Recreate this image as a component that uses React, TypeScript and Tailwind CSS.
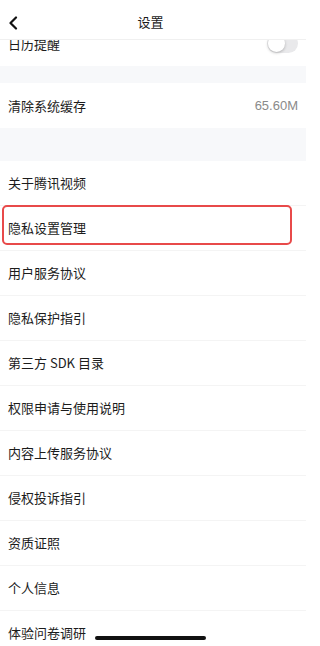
const items = [
  "关于腾讯视频",
  "隐私设置管理",
  "用户服务协议",
  "隐私保护指引",
  "第三方 SDK 目录",
  "权限申请与使用说明",
  "内容上传服务协议",
  "侵权投诉指引",
  "资质证照",
  "个人信息",
  "体验问卷调研",
];

const font = { fontFamily: '"Noto Sans CJK SC", "Liberation Sans", sans-serif' };

const Row = ({ label, highlight }: { label: string; highlight?: boolean }) => (
  <div className="relative flex h-[45px] shrink-0 items-center border-b border-[#f4f4f4] bg-white px-2 text-[13px] text-[#1c1c1c]">
    {label}
    {highlight && (
      <div className="pointer-events-none absolute left-[2px] right-[14px] top-[-1px] bottom-[5px] rounded-[5px] border-2 border-[#e84a4a]" />
    )}
  </div>
);

export default function App() {
  return (
    <div className="relative flex h-[646px] w-[306px] flex-col overflow-hidden bg-[#f7f8fa]" style={font}>
      <header className="relative flex h-[40px] shrink-0 items-center justify-center border-b border-[#f0f0f0] bg-white pt-[5px]">
        <svg className="absolute left-[8px] top-[16px]" width="10" height="14" viewBox="0 0 10 14" fill="none">
          <path d="M8 1.5L2.5 7L8 12.5" stroke="#111" strokeWidth="2.2" strokeLinecap="round" strokeLinejoin="round" />
        </svg>
        <span className="pr-[5px] text-[13px] text-[#1a1a1a]">设置</span>
      </header>

      <div className="flex h-[26px] shrink-0 items-end overflow-hidden bg-white">
        <div className="flex h-[45px] w-full shrink-0 items-center justify-between px-2 text-[13px] text-[#1c1c1c]">
          <span>日历提醒</span>
          <div className="relative h-[19px] w-[31px] rounded-full bg-[#e9e9eb]">
            <div className="absolute left-[1px] top-[1px] h-[17px] w-[17px] rounded-full bg-white shadow-[0_1px_3px_rgba(0,0,0,0.25)]" />
          </div>
        </div>
      </div>

      <div className="h-[17px] shrink-0" />

      <div className="flex h-[45px] shrink-0 items-center justify-between bg-white px-2 text-[13px] text-[#1c1c1c]">
        <span>清除系统缓存</span>
        <span className="text-[#8a8a8a]" style={{ fontFamily: '"Liberation Sans", sans-serif' }}>
          65.60M
        </span>
      </div>

      <div className="h-[33px] shrink-0" />

      <div className="flex flex-col">
        {items.map((label, i) => (
          <Row key={label} label={label} highlight={i === 1} />
        ))}
      </div>

      <div className="absolute bottom-[6px] left-[95px] h-[4px] w-[111px] rounded-full bg-[#111]" />
    </div>
  );
}
